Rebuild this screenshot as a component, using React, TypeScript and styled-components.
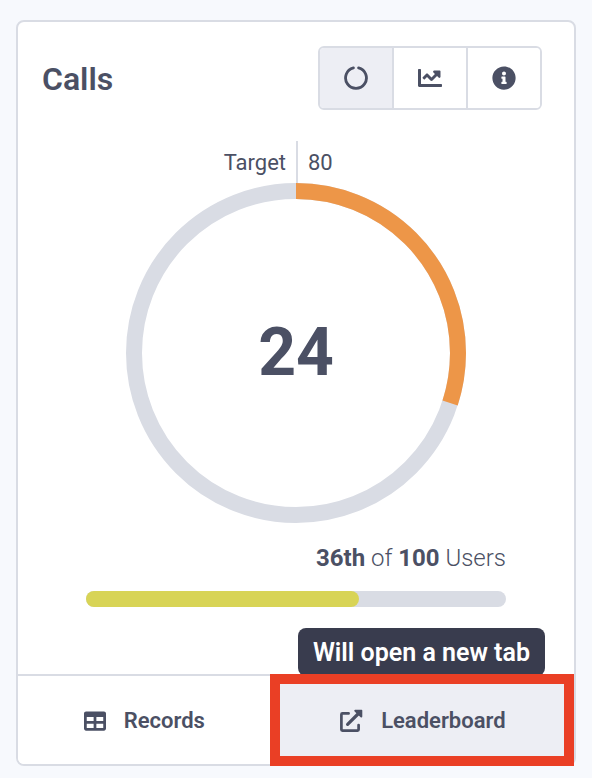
import React from "react";
import styled, { createGlobalStyle } from "styled-components";
import { FaChartLine, FaInfoCircle, FaTable } from "react-icons/fa";

const colors = {
  page: "#f7f9fd",
  card: "#ffffff",
  text: "#4b5064",
  line: "#d9dce4",
  active: "#edeef4",
  orange: "#ed9648",
  lime: "#d8d456",
  tooltip: "#393c4e",
  highlight: "#ea3f25",
};

const GlobalStyle = createGlobalStyle`
  *, *::before, *::after { box-sizing: border-box; }
  body {
    margin: 0;
    background: ${colors.page};
    color: ${colors.text};
    font-family: Roboto, "Noto Sans", sans-serif;
    font-size: 22px;
    line-height: 32px;
  }
`;

const Page = styled.main`
  padding: 20px 16px 12px;
`;

const Card = styled.section`
  border: 2px solid ${colors.line};
  border-radius: 8px;
  background: ${colors.card};
`;

const Header = styled.header`
  display: flex;
  align-items: center;
  justify-content: space-between;
  padding: 24px 32px 0 24px;
`;

const Title = styled.h2`
  margin: 0;
  padding-top: 2px;
  font-size: 32px;
  line-height: 40px;
  font-weight: 600;
`;

const ViewSwitch = styled.div`
  display: flex;
  border: 2px solid ${colors.line};
  border-radius: 6px;
  overflow: hidden;
`;

const ViewButton = styled.button<{ $active?: boolean }>`
  display: flex;
  align-items: center;
  justify-content: center;
  width: 72px;
  height: 60px;
  padding: 0;
  border: 0;
  background: ${(p) => (p.$active ? colors.active : colors.card)};
  color: inherit;
  cursor: pointer;

  & + & {
    width: 74px;
    border-left: 2px solid ${colors.line};
  }
`;

const Body = styled.div`
  padding: 31px 68px 67px;
`;

const TargetRow = styled.div`
  display: grid;
  grid-template-columns: 1fr 1fr;
  height: 42px;
  line-height: 44px;
`;

const TargetLabel = styled.span`
  padding-right: 10px;
  text-align: right;
`;

const TargetValue = styled.span`
  height: 42px;
  padding-left: 10px;
  border-left: 2px solid ${colors.line};
`;

const Dial = styled.div`
  display: grid;
  place-items: center;
  max-width: 340px;
  margin: 0 auto;

  > * {
    grid-area: 1 / 1;
  }
`;

const Ring = styled.svg`
  display: block;
  width: 100%;
`;

const Count = styled.strong`
  font-size: 66px;
  line-height: 80px;
  font-weight: 700;
`;

const Rank = styled.p`
  margin: 19px 0 17px;
  font-size: 24px;
  font-weight: 300;
  text-align: right;

  b {
    font-weight: 700;
  }
`;

const Track = styled.div`
  height: 16px;
  border-radius: 8px;
  background: ${colors.line};
`;

const Fill = styled.div`
  height: 100%;
  border-radius: 8px;
  background: ${colors.lime};
`;

const Footer = styled.footer`
  display: grid;
  grid-template-columns: 5fr 6fr;
  border-top: 2px solid ${colors.line};
`;

const FooterLink = styled.a<{ $active?: boolean }>`
  position: relative;
  display: flex;
  align-items: center;
  justify-content: center;
  gap: 18px;
  height: 88px;
  padding-top: 2px;
  border-radius: ${(p) => (p.$active ? "0 0 6px 0" : "0 0 0 6px")};
  background: ${(p) => (p.$active ? colors.active : colors.card)};
  color: inherit;
  font-weight: 600;
  text-decoration: none;
`;

const Tooltip = styled.span`
  position: absolute;
  right: 29px;
  bottom: 88px;
  padding: 9px 15px 7px;
  border-radius: 8px;
  background: ${colors.tooltip};
  color: #ffffff;
  font-size: 25px;
  white-space: nowrap;
`;

const Highlight = styled.span`
  position: absolute;
  inset: -2px 0 -2px -1px;
  border: 10px solid ${colors.highlight};
`;

function NotchIcon() {
  return (
    <svg width="24" height="24" viewBox="0 0 24 24" fill="none" stroke="currentColor" strokeWidth="2.8" strokeLinecap="round" aria-hidden="true">
      <path d="M9.4 1.9A10.4 10.4 0 1 0 14.6 1.9" />
    </svg>
  );
}

function OpenIcon() {
  return (
    <svg width="24" height="24" viewBox="0 0 24 24" fill="none" stroke="currentColor" strokeWidth="2.7" strokeLinecap="round" strokeLinejoin="round" aria-hidden="true">
      <path d="M9.6 4.4H3.4a1 1 0 0 0-1 1V20.600a1 1 0 0 0 1 1H18.600a1 1 0 0 0 1-1V16" />
      <path d="M8.600 15.400 19.500 4.500" strokeWidth="3.2" />
      <path d="M16.200.8H22.600a.7.7 0 0 1 .7.7V7.600C23.300 8.600 22.300 8.900 21.600 8.200L15.600 2.400C15 1.700 15.300.8 16.200.8Z" fill="currentColor" stroke="none" />
    </svg>
  );
}

const value = 24;
const target = 80;
const rankProgress = 65;

export default function App() {
  return (
    <>
      <GlobalStyle />
      <Page>
        <Card>
          <Header>
            <Title>Calls</Title>
            <ViewSwitch role="group" aria-label="View">
              <ViewButton type="button" $active aria-pressed="true" aria-label="Progress">
                <NotchIcon />
              </ViewButton>
              <ViewButton type="button" aria-label="Trend">
                <FaChartLine size={24} />
              </ViewButton>
              <ViewButton type="button" aria-label="Information">
                <FaInfoCircle size={24} />
              </ViewButton>
            </ViewSwitch>
          </Header>
          <Body>
            <TargetRow>
              <TargetLabel>Target</TargetLabel>
              <TargetValue>{target}</TargetValue>
            </TargetRow>
            <Dial>
              <Ring viewBox="0 0 340 340" fill="none" strokeWidth="16" aria-hidden="true">
                <circle cx="170" cy="170" r="162" stroke={colors.line} />
                <circle
                  cx="170"
                  cy="170"
                  r="162"
                  stroke={colors.orange}
                  pathLength={target}
                  strokeDasharray={`${value} ${target - value}`}
                  transform="rotate(-90 170 170)"
                />
              </Ring>
              <Count>{value}</Count>
            </Dial>
            <Rank>
              <b>36th</b> of <b>100</b> Users
            </Rank>
            <Track role="progressbar" aria-label="Rank" aria-valuenow={rankProgress}>
              <Fill style={{ width: `${rankProgress}%` }} />
            </Track>
          </Body>
          <Footer>
            <FooterLink href="#records">
              <FaTable size={22} />
              Records
            </FooterLink>
            <FooterLink href="#leaderboard" target="_blank" $active>
              <OpenIcon />
              Leaderboard
              <Tooltip role="tooltip">Will open a new tab</Tooltip>
              <Highlight />
            </FooterLink>
          </Footer>
        </Card>
      </Page>
    </>
  );
}
